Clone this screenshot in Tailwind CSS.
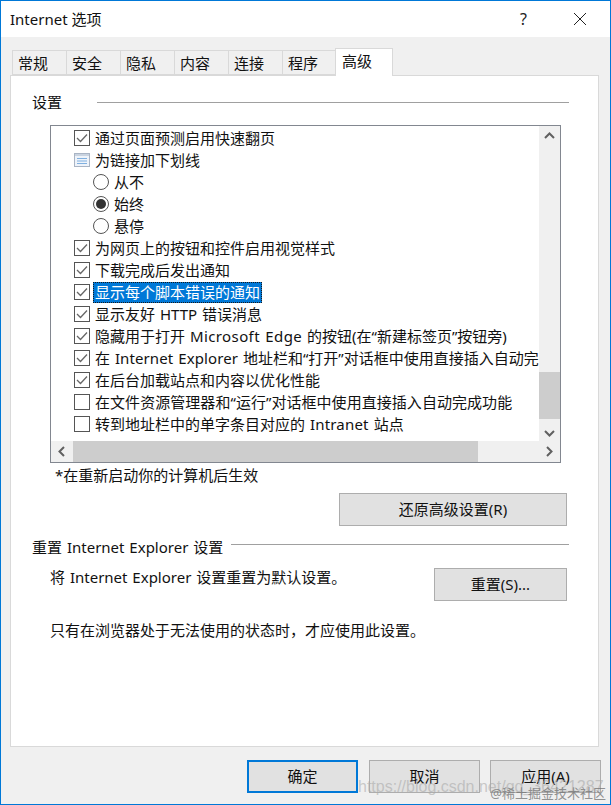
<!DOCTYPE html>
<html lang="zh-CN">
<head>
  <meta charset="UTF-8" />
  <title>Internet 选项</title>
  <script src="https://cdn.jsdelivr.net/npm/@tailwindcss/browser@4"></script>
</head>
<body class="bg-white">
  <div class="relative w-[611px] h-[805px] overflow-hidden flex flex-col border border-[#0078d7] text-[15px] text-[#111] font-['Noto_Sans','Noto_Sans_CJK_SC',sans-serif]">
    <!-- title bar -->
    <div class="h-[36px] shrink-0 bg-white flex items-center pl-[9px] relative">
      <span class="leading-[36px]">Internet 选项</span>
      <span class="ml-auto mr-[47px] text-[16px] leading-[36px] text-[#222]">?</span>
      <svg class="mr-[24px]" width="12" height="12" viewBox="0 0 12 12"><path d="M0 0L12 12M12 0L0 12" stroke="#222" stroke-width="1" fill="none"/></svg>
    </div>

    <div class="flex-1 bg-[#f0f0f0] flex flex-col pl-[9px] pr-[11px]">
      <!-- tabs -->
      <div class="flex h-[38px] pl-[2px] items-end relative z-10 leading-none">
        <div class="w-[55px] h-[25px] bg-[#f0f0f0] border border-[#d9d9d9] flex items-center pl-[5px] pt-px">常规</div>
        <div class="w-[55px] h-[25px] -ml-px bg-[#f0f0f0] border border-[#d9d9d9] flex items-center pl-[5px] pt-px">安全</div>
        <div class="w-[55px] h-[25px] -ml-px bg-[#f0f0f0] border border-[#d9d9d9] flex items-center pl-[5px] pt-px">隐私</div>
        <div class="w-[55px] h-[25px] -ml-px bg-[#f0f0f0] border border-[#d9d9d9] flex items-center pl-[5px] pt-px">内容</div>
        <div class="w-[55px] h-[25px] -ml-px bg-[#f0f0f0] border border-[#d9d9d9] flex items-center pl-[5px] pt-px">连接</div>
        <div class="w-[54px] h-[25px] -ml-px bg-[#f0f0f0] border border-[#d9d9d9] flex items-center pl-[5px] pt-px">程序</div>
        <div class="w-[58px] h-[28px] -ml-px -mb-px bg-white border border-[#d9d9d9] border-b-0 flex items-center pl-[6px] pb-[3px]">高级</div>
      </div>

      <!-- panel -->
      <div class="h-[672px] bg-white border border-[#d9d9d9] relative pt-[15px] pl-[21px] pr-[29px]">
        <div class="flex items-center h-[22px]">
          <span>设置</span>
          <div class="ml-[35px] flex-1 h-px bg-[#a0a0a0]"></div>
        </div>

        <!-- list box -->
        <div class="mt-[12px] ml-[18px] w-[511px] h-[338px] border border-[#828790] bg-white relative overflow-hidden">
          <div class="w-[488px] h-[315px] overflow-hidden pt-px whitespace-nowrap">
            <div class="h-[22px] flex items-center pl-[23px]">
              <svg class="shrink-0 mr-[5px]" width="16" height="16" viewBox="0 0 16 16"><rect x="0.5" y="0.5" width="15" height="15" fill="#fff" stroke="#555"/><path d="M3 8l3.5 3.5L13 4.5" fill="none" stroke="#666" stroke-width="1.3"/></svg>
              <span>通过页面预测启用快速翻页</span>
            </div>
            <div class="h-[22px] flex items-center pl-[23px]">
              <svg class="shrink-0 mr-[5px]" width="16" height="14" viewBox="0 0 16 14"><rect x="0.5" y="0.5" width="15" height="13" fill="#eef3fa" stroke="#a9b4c4"/><rect x="1" y="1" width="14" height="2" fill="#c9d3e0"/><path d="M3 5.5h10M3 8h10M3 10.5h10" stroke="#7fb0e0" stroke-width="1.2"/></svg>
              <span>为链接加下划线</span>
            </div>
            <div class="h-[22px] flex items-center pl-[42px]">
              <span class="shrink-0 w-[16px] h-[16px] rounded-full border border-[#555] bg-white mr-[5px]"></span>
              <span>从不</span>
            </div>
            <div class="h-[22px] flex items-center pl-[42px]">
              <span class="shrink-0 w-[16px] h-[16px] rounded-full border border-[#555] bg-white mr-[5px] flex items-center justify-center"><span class="w-[10px] h-[10px] rounded-full bg-[#333]"></span></span>
              <span>始终</span>
            </div>
            <div class="h-[22px] flex items-center pl-[42px]">
              <span class="shrink-0 w-[16px] h-[16px] rounded-full border border-[#555] bg-white mr-[5px]"></span>
              <span>悬停</span>
            </div>
            <div class="h-[22px] flex items-center pl-[23px]">
              <svg class="shrink-0 mr-[5px]" width="16" height="16" viewBox="0 0 16 16"><rect x="0.5" y="0.5" width="15" height="15" fill="#fff" stroke="#555"/><path d="M3 8l3.5 3.5L13 4.5" fill="none" stroke="#666" stroke-width="1.3"/></svg>
              <span>为网页上的按钮和控件启用视觉样式</span>
            </div>
            <div class="h-[22px] flex items-center pl-[23px]">
              <svg class="shrink-0 mr-[5px]" width="16" height="16" viewBox="0 0 16 16"><rect x="0.5" y="0.5" width="15" height="15" fill="#fff" stroke="#555"/><path d="M3 8l3.5 3.5L13 4.5" fill="none" stroke="#666" stroke-width="1.3"/></svg>
              <span>下载完成后发出通知</span>
            </div>
            <div class="h-[22px] flex items-center pl-[23px]">
              <svg class="shrink-0 mr-[3px]" width="16" height="16" viewBox="0 0 16 16"><rect x="0.5" y="0.5" width="15" height="15" fill="#fff" stroke="#555"/><path d="M3 8l3.5 3.5L13 4.5" fill="none" stroke="#666" stroke-width="1.3"/></svg>
              <span class="h-[21px] leading-[19px] px-px bg-[#0078d7] text-white border border-dotted border-[#1a1a1a]">显示每个脚本错误的通知</span>
            </div>
            <div class="h-[22px] flex items-center pl-[23px]">
              <svg class="shrink-0 mr-[5px]" width="16" height="16" viewBox="0 0 16 16"><rect x="0.5" y="0.5" width="15" height="15" fill="#fff" stroke="#555"/><path d="M3 8l3.5 3.5L13 4.5" fill="none" stroke="#666" stroke-width="1.3"/></svg>
              <span class="[word-spacing:1px]">显示友好 HTTP 错误消息</span>
            </div>
            <div class="h-[22px] flex items-center pl-[23px]">
              <svg class="shrink-0 mr-[5px]" width="16" height="16" viewBox="0 0 16 16"><rect x="0.5" y="0.5" width="15" height="15" fill="#fff" stroke="#555"/><path d="M3 8l3.5 3.5L13 4.5" fill="none" stroke="#666" stroke-width="1.3"/></svg>
              <span class="[word-spacing:1px]">隐藏用于打开 <span class="tracking-[0.4px]">Microsoft Edge</span> 的按钮(在“新建标签页”按钮旁)</span>
            </div>
            <div class="h-[22px] flex items-center pl-[23px]">
              <svg class="shrink-0 mr-[5px]" width="16" height="16" viewBox="0 0 16 16"><rect x="0.5" y="0.5" width="15" height="15" fill="#fff" stroke="#555"/><path d="M3 8l3.5 3.5L13 4.5" fill="none" stroke="#666" stroke-width="1.3"/></svg>
              <span class="[word-spacing:1px]">在 <span class="tracking-[0.1px]">Internet Explorer</span> 地址栏和“打开”对话框中使用直接插入自动完</span>
            </div>
            <div class="h-[22px] flex items-center pl-[23px]">
              <svg class="shrink-0 mr-[5px]" width="16" height="16" viewBox="0 0 16 16"><rect x="0.5" y="0.5" width="15" height="15" fill="#fff" stroke="#555"/><path d="M3 8l3.5 3.5L13 4.5" fill="none" stroke="#666" stroke-width="1.3"/></svg>
              <span>在后台加载站点和内容以优化性能</span>
            </div>
            <div class="h-[22px] flex items-center pl-[23px]">
              <svg class="shrink-0 mr-[5px]" width="16" height="16" viewBox="0 0 16 16"><rect x="0.5" y="0.5" width="15" height="15" fill="#fff" stroke="#555"/></svg>
              <span class="tracking-[0.05px]">在文件资源管理器和“运行”对话框中使用直接插入自动完成功能</span>
            </div>
            <div class="h-[22px] flex items-center pl-[23px]">
              <svg class="shrink-0 mr-[5px]" width="16" height="16" viewBox="0 0 16 16"><rect x="0.5" y="0.5" width="15" height="15" fill="#fff" stroke="#555"/></svg>
              <span class="[word-spacing:1px]">转到地址栏中的单字条目对应的 <span class="tracking-[0.2px]">Intranet</span> 站点</span>
            </div>
          </div>

          <!-- vertical scrollbar -->
          <div class="absolute right-0 top-0 w-[21px] h-[315px] bg-[#f0f0f0] flex flex-col items-center">
            <svg class="mt-[6px]" width="11" height="7" viewBox="0 0 11 7"><path d="M1 6l4.5-4.5L10 6" fill="none" stroke="#606060" stroke-width="2"/></svg>
            <div class="absolute top-[246px] w-[21px] h-[47px] bg-[#cdcdcd]"></div>
            <svg class="mt-auto mb-[4px]" width="11" height="7" viewBox="0 0 11 7"><path d="M1 1l4.5 4.5L1 10" fill="none" stroke="#606060" stroke-width="0" /><path d="M1 1l4.5 4.5L10 1" fill="none" stroke="#606060" stroke-width="2"/></svg>
          </div>
          <!-- horizontal scrollbar -->
          <div class="absolute left-0 bottom-0 w-full h-[21px] bg-[#f0f0f0] flex items-center">
            <svg class="ml-[7px]" width="7" height="11" viewBox="0 0 7 11"><path d="M6 1L1.5 5.5L6 10" fill="none" stroke="#606060" stroke-width="2"/></svg>
            <div class="absolute left-[22px] top-0 w-[405px] h-[21px] bg-[#cdcdcd]"></div>
            <svg class="ml-auto mr-[7px]" width="7" height="11" viewBox="0 0 7 11"><path d="M1 1l4.5 4.5L1 10" fill="none" stroke="#606060" stroke-width="2"/></svg>
          </div>
        </div>

        <div class="mt-[1px] ml-[23px] h-[22px] leading-[22px]">*在重新启动你的计算机后生效</div>

        <div class="mt-[7px] flex justify-end">
          <div class="w-[228px] h-[33px] bg-[#e1e1e1] border border-[#adadad] flex items-center justify-center mr-[2px]">还原高级设置(R)</div>
        </div>

        <div class="mt-[10px] flex items-center h-[22px]">
          <span class="[word-spacing:1px]">重置 Internet Explorer 设置</span>
          <div class="ml-[8px] flex-1 h-px bg-[#a0a0a0] mb-[5px]"></div>
        </div>

        <div class="mt-[10px] ml-[18px] flex items-start">
          <span class="leading-[22px] -mt-[2px] [word-spacing:1px]">将 Internet Explorer 设置重置为默认设置。</span>
          <div class="ml-auto w-[133px] h-[33px] bg-[#e1e1e1] border border-[#adadad] flex items-center justify-center mr-[2px]">重置(S)...</div>
        </div>

        <div class="mt-[18px] ml-[18px] leading-[22px]">只有在浏览器处于无法使用的状态时，才应使用此设置。</div>
      </div>

      <!-- dialog buttons -->
      <div class="flex justify-end gap-[10px] mt-[13px] -mr-[2px]">
        <div class="w-[111px] h-[33px] bg-[#e1e1e1] border-2 border-[#0078d7] flex items-center justify-center">确定</div>
        <div class="w-[111px] h-[33px] ml-px bg-[#e1e1e1] border border-[#adadad] flex items-center justify-center">取消</div>
        <div class="w-[111px] h-[33px] bg-[#e1e1e1] border border-[#adadad] flex items-center justify-center">应用(A)</div>
      </div>
    </div>

    <!-- watermarks -->
    <div class="absolute left-[357px] top-[778px] text-[16px] leading-none text-[#aaa]/60 font-['Liberation_Sans',sans-serif] whitespace-nowrap">https://blog.csdn.net/qq_36421287</div>
    <div class="absolute right-[4px] top-[783px] text-[13px] leading-[18px] text-[#777]/80 whitespace-nowrap">@稀土掘金技术社区</div>
  </div>
</body>
</html>
